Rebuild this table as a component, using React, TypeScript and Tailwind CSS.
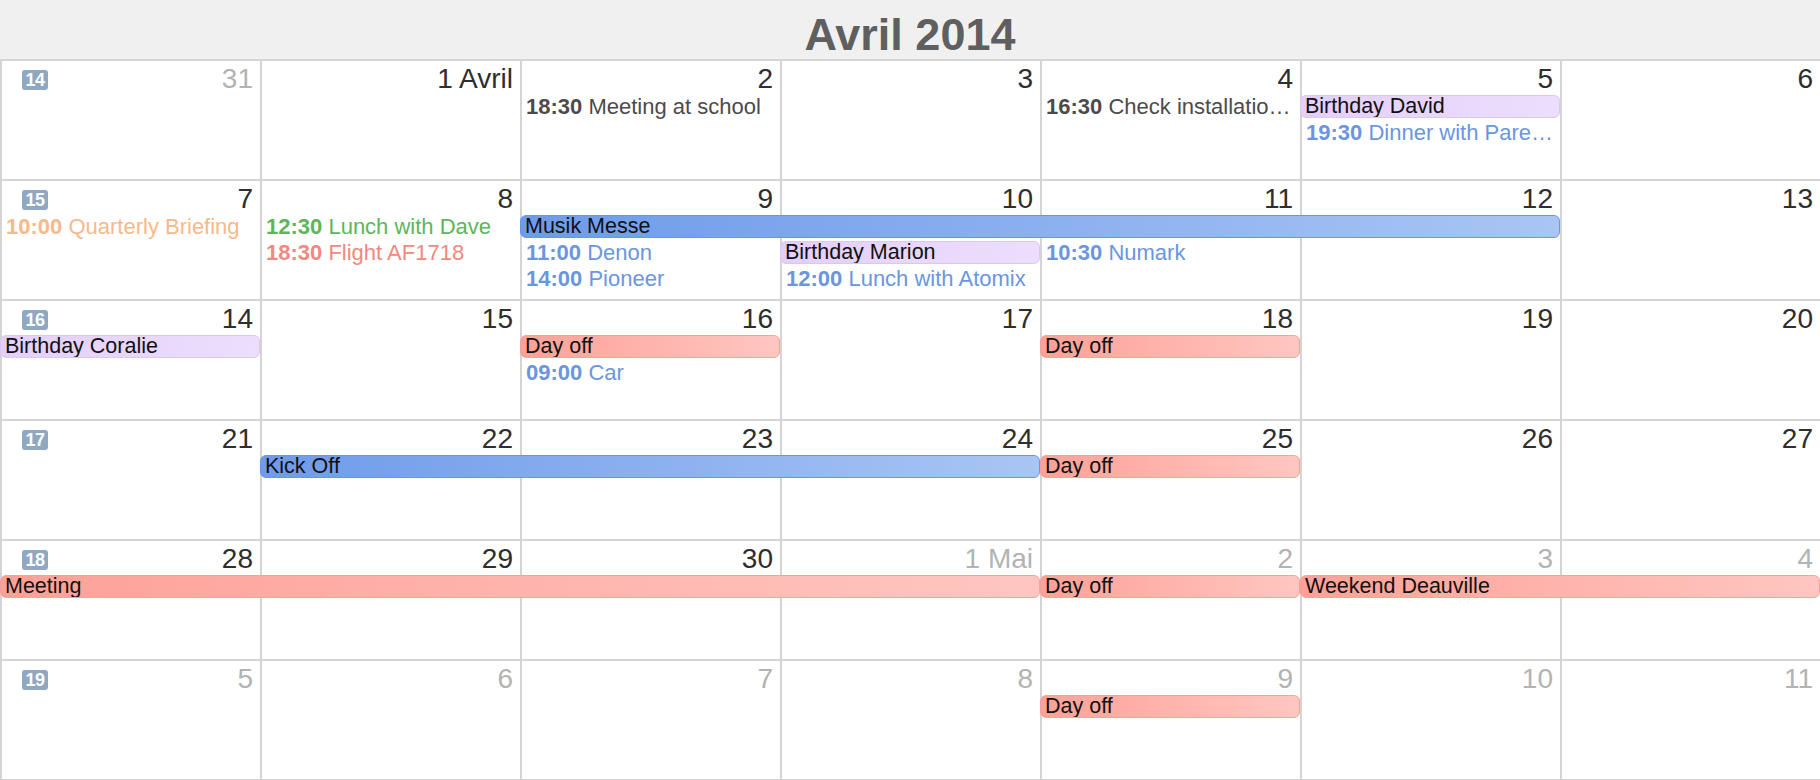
import React from "react";

type Day = { label: string; muted?: boolean };
type Ev =
  | { kind: "bar"; col: number; span: number; slot: number; color: "blue" | "red" | "purple"; title: string }
  | { kind: "timed"; col: number; slot: number; color: "gray" | "blue" | "orange" | "green" | "salmon"; time: string; title: string };

type Week = { num: number; days: Day[]; events: Ev[] };

const colStart: Record<number, string> = {
  1: "col-start-1",
  2: "col-start-2",
  3: "col-start-3",
  4: "col-start-4",
  5: "col-start-5",
  6: "col-start-6",
  7: "col-start-7",
};
const colEnd: Record<number, string> = {
  2: "col-end-2",
  3: "col-end-3",
  4: "col-end-4",
  5: "col-end-5",
  6: "col-end-6",
  7: "col-end-7",
  8: "col-end-8",
};
const rowStart: Record<number, string> = {
  1: "row-start-2",
  2: "row-start-3",
  3: "row-start-4",
};

const barColor: Record<string, string> = {
  blue: "bg-linear-to-r from-[#6e9bea] to-[#a9c5f3] border-[#6a95e2]",
  red: "bg-linear-to-r from-[#fda198] to-[#ffc6c1] border-[#f9a098]",
  purple: "bg-linear-to-r from-[#e4cffb] to-[#ecdefc] border-[#dcc6f6]",
};

const timedColor: Record<string, string> = {
  gray: "text-[#4b4b4b]",
  blue: "text-[#6a96e0]",
  orange: "text-[#f8b98a]",
  green: "text-[#5bb659]",
  salmon: "text-[#f2887e]",
};

const d = (label: string, muted = false): Day => ({ label, muted });

const weeks: Week[] = [
  {
    num: 14,
    days: [d("31", true), d("1 Avril"), d("2"), d("3"), d("4"), d("5"), d("6")],
    events: [
      { kind: "timed", col: 3, slot: 1, color: "gray", time: "18:30", title: "Meeting at school" },
      { kind: "timed", col: 5, slot: 1, color: "gray", time: "16:30", title: "Check installatio…" },
      { kind: "bar", col: 6, span: 1, slot: 1, color: "purple", title: "Birthday David" },
      { kind: "timed", col: 6, slot: 2, color: "blue", time: "19:30", title: "Dinner with Pare…" },
    ],
  },
  {
    num: 15,
    days: [d("7"), d("8"), d("9"), d("10"), d("11"), d("12"), d("13")],
    events: [
      { kind: "timed", col: 1, slot: 1, color: "orange", time: "10:00", title: "Quarterly Briefing" },
      { kind: "timed", col: 2, slot: 1, color: "green", time: "12:30", title: "Lunch with Dave" },
      { kind: "timed", col: 2, slot: 2, color: "salmon", time: "18:30", title: "Flight AF1718" },
      { kind: "bar", col: 3, span: 4, slot: 1, color: "blue", title: "Musik Messe" },
      { kind: "timed", col: 3, slot: 2, color: "blue", time: "11:00", title: "Denon" },
      { kind: "timed", col: 3, slot: 3, color: "blue", time: "14:00", title: "Pioneer" },
      { kind: "bar", col: 4, span: 1, slot: 2, color: "purple", title: "Birthday Marion" },
      { kind: "timed", col: 4, slot: 3, color: "blue", time: "12:00", title: "Lunch with Atomix" },
      { kind: "timed", col: 5, slot: 2, color: "blue", time: "10:30", title: "Numark" },
    ],
  },
  {
    num: 16,
    days: [d("14"), d("15"), d("16"), d("17"), d("18"), d("19"), d("20")],
    events: [
      { kind: "bar", col: 1, span: 1, slot: 1, color: "purple", title: "Birthday Coralie" },
      { kind: "bar", col: 3, span: 1, slot: 1, color: "red", title: "Day off" },
      { kind: "timed", col: 3, slot: 2, color: "blue", time: "09:00", title: "Car" },
      { kind: "bar", col: 5, span: 1, slot: 1, color: "red", title: "Day off" },
    ],
  },
  {
    num: 17,
    days: [d("21"), d("22"), d("23"), d("24"), d("25"), d("26"), d("27")],
    events: [
      { kind: "bar", col: 2, span: 3, slot: 1, color: "blue", title: "Kick Off" },
      { kind: "bar", col: 5, span: 1, slot: 1, color: "red", title: "Day off" },
    ],
  },
  {
    num: 18,
    days: [d("28"), d("29"), d("30"), d("1 Mai", true), d("2", true), d("3", true), d("4", true)],
    events: [
      { kind: "bar", col: 1, span: 4, slot: 1, color: "red", title: "Meeting" },
      { kind: "bar", col: 5, span: 1, slot: 1, color: "red", title: "Day off" },
      { kind: "bar", col: 6, span: 2, slot: 1, color: "red", title: "Weekend Deauville" },
    ],
  },
  {
    num: 19,
    days: [d("5", true), d("6", true), d("7", true), d("8", true), d("9", true), d("10", true), d("11", true)],
    events: [{ kind: "bar", col: 5, span: 1, slot: 1, color: "red", title: "Day off" }],
  },
];

function WeekRow({ week }: { week: Week }) {
  return (
    <div className="grid grid-cols-7 grid-rows-[34px_26px_26px_26px_1fr] h-[120px] border-b-2 border-[#d4d4d4]">
      {week.days.map((day, i) => (
        <div
          key={"d" + i}
          className={`${colStart[i + 1]} row-span-full border-l-2 border-[#d4d4d4] flex items-start justify-between pt-[4px] pr-[7px]`}
        >
          {i === 0 ? (
            <div className="ml-[20px] mt-[5px] w-[26px] h-[20px] rounded-[3px] bg-[#8fa8c2] text-white text-[18px] leading-[20px] font-bold text-center tracking-[-0.5px]">
              {week.num}
            </div>
          ) : (
            <span />
          )}
          <span className={`text-[28px] leading-[28px] ${day.muted ? "text-[#b3b3b3]" : "text-[#2e2e2e]"}`}>
            {day.label}
          </span>
        </div>
      ))}
      {week.events.map((ev, j) =>
        ev.kind === "bar" ? (
          <div
            key={"e" + j}
            className={`${colStart[ev.col]} ${colEnd[ev.col + ev.span]} ${rowStart[ev.slot]} self-start h-[23px] rounded-[6px] border ${barColor[ev.color]} pl-[4px] text-[21.5px] leading-[21px] text-[#111] whitespace-nowrap overflow-hidden`}
          >
            {ev.title}
          </div>
        ) : (
          <div
            key={"e" + j}
            className={`${colStart[ev.col]} ${rowStart[ev.slot]} min-w-0 pl-[6px] pr-[4px] text-[22px] leading-[24px] whitespace-nowrap overflow-hidden ${timedColor[ev.color]}`}
          >
            <span className="font-bold">{ev.time}</span> {ev.title}
          </div>
        )
      )}
    </div>
  );
}

export default function App() {
  return (
    <div className="w-full h-[780px] overflow-hidden bg-white font-['Liberation_Sans',Arial,sans-serif]">
      <div className="h-[61px] bg-[#f0f0f0] border-b-2 border-[#d4d4d4] pt-[13px] text-center">
        <span className="text-[45px] leading-[44px] font-bold text-[#5f5f5f]">Avril 2014</span>
      </div>
      {weeks.map((w) => (
        <WeekRow key={w.num} week={w} />
      ))}
    </div>
  );
}
